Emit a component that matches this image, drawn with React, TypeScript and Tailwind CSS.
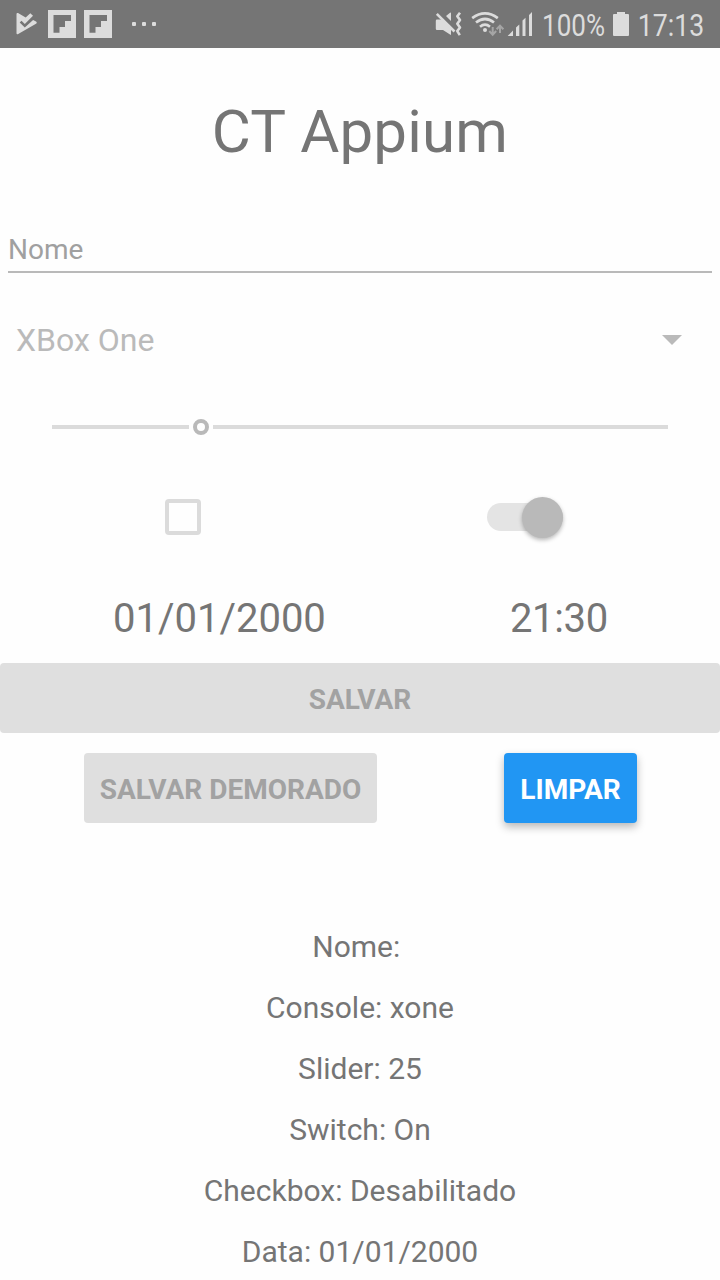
const results = [
  'Nome: ',
  'Console: xone',
  'Slider: 25',
  'Switch: On',
  'Checkbox: Desabilitado',
  'Data: 01/01/2000',
];

function PlayCheckIcon() {
  return (
    <svg className="h-6 w-6" viewBox="0 0 24 24" fill="#dcdcdc">
      <path d="M1.500 2.200C1.500 1.200 2.200 .7 3 1.100L10.700 5.400 15.300 1.200 18 3.800 9.800 12 6.500 8.700 4.700 10.500 9.800 15.400 18.100 8 21 9.600C22 10.300 22 11.200 21 11.800L3.200 22C2.200 22.500 1.500 22.200 1.500 21.200Z" />
    </svg>
  );
}

function FlipIcon() {
  return (
    <svg className="h-7 w-7" viewBox="0 0 28 28">
      <path fill="#dcdcdc" d="M0 0h28v28H0z" />
      <path fill="#757575" d="M5.5 5h17.5v6h-6v6h-5.5v5.7h-6z" />
    </svg>
  );
}

function StatusBar() {
  return (
    <header className="flex h-12 items-center bg-[#757575] pr-4 pl-[15px] text-[31px] leading-none text-[#dcdcdc]">
      <PlayCheckIcon />
      <div className="ml-[9px] flex gap-2">
        <FlipIcon />
        <FlipIcon />
      </div>
      <div className="ml-5 flex gap-[6px]">
        <span className="size-1 rounded-[1px] bg-[#dcdcdc]" />
        <span className="size-1 rounded-[1px] bg-[#dcdcdc]" />
        <span className="size-1 rounded-[1px] bg-[#dcdcdc]" />
      </div>
      <svg className="mr-px ml-auto h-12 w-[110px] shrink-0" viewBox="0 0 110 48" fill="none">
        <path fill="#dcdcdc" d="M5 19.500h5L19 28.500V34q0 1.500-1 .6L11 30H5q-1.200 0-1.200-1.200v-8Q3.800 19.500 5 19.500zM14 16l4-3.300q1-.7 1 .5V21z" />
        <path stroke="#dcdcdc" strokeWidth="2.600" d="m4.800 13.800 17.700 17.700" />
        <path stroke="#dcdcdc" strokeWidth="2.600" strokeLinejoin="round" d="m28 12.800-2.700 3.500 2.700 3.700-2.700 3.700 2.700 3.700-2.700 3.700 2.500 4" />
        <g stroke="#dcdcdc" strokeWidth="2.700">
          <path d="M40.200 18.200q12.800-9.600 25.600 0" />
          <path d="M44 22.500q9-7 18 0" />
          <path d="M48 26.700q5-4 10 0" />
        </g>
        <circle cx="53" cy="30" r="2" fill="#dcdcdc" />
        <path stroke="#a5a5a5" strokeWidth="2" d="M60.700 27v7.500M57.300 31l3.400 3.800 3.400-3.800M68 33v-7M64.600 29.300 68 25.700l3.400 3.600" />
        <path fill="#dcdcdc" d="m75.700 36 5.300-5.500V36zM84 27.500l3.300-3V36H84zM90.500 20.500l3-2.800V36h-3zM97 15l3-3v24h-3z" />
      </svg>
      <span className="mr-2 flex w-[62px] shrink-0 justify-end">
        <span className="origin-right scale-x-[0.84] pt-0.5">100%</span>
      </span>
      <svg className="h-6 w-4 shrink-0" viewBox="0 0 16 24" fill="#dcdcdc">
        <path d="M4 0h8v2h3q1 0 1 1v20q0 1-1 1H1q-1 0-1-1V3q0-1 1-1h3z" />
      </svg>
      <span className="flex w-[75px] shrink-0 justify-end">
        <span className="origin-right scale-x-[0.86] pt-0.5">17:13</span>
      </span>
    </header>
  );
}

export default function App() {
  return (
    <div
      className="flex h-[1280px] w-[720px] flex-col overflow-hidden bg-[#fefefe] text-[#757575]"
      style={{ fontFamily: 'Roboto, sans-serif' }}
    >
      <StatusBar />
      <main className="flex flex-col">
        <h1 className="flex h-[167px] items-center justify-center text-[60px] tracking-[0.2px]">CT Appium</h1>
        <div className="mx-2 mt-[13px] flex h-[45px] items-center border-b-2 border-[#b9b9b9] text-[28px] text-[#a0a0a0]">
          Nome
        </div>
        <div className="flex h-[134px] items-center justify-between pr-[38px] pl-4 text-[32px] text-[#bababa]">
          <span>XBox One</span>
          <svg className="h-[10px] w-5" viewBox="0 0 20 10" fill="#bababa">
            <path d="M0 0h20L10 10z" />
          </svg>
        </div>
        <div className="mx-[52px] flex h-10 items-center">
          <div className="h-1 w-[137px] bg-[#dbdbdb]" />
          <div className="mx-1 size-4 rounded-full border-4 border-[#b9b9b9]" />
          <div className="h-1 flex-1 bg-[#dbdbdb]" />
        </div>
        <div className="mt-[30px] flex h-20 items-center pr-[157px] pl-[165px]">
          <div className="size-9 rounded-[4px] border-4 border-[#dbdbdb]" />
          <div className="ml-auto flex h-7 w-[76px] items-center justify-end rounded-full bg-[#e4e4e4]">
            <div className="size-[41px] shrink-0 rounded-full bg-[#b9b9b9] shadow-[0_2px_4px_rgba(0,0,0,0.28)]" />
          </div>
        </div>
        <div className="mt-5 flex h-[82px] items-center justify-between pt-0.5 pr-[112px] pl-[113px] text-[40px]">
          <span>01/01/2000</span>
          <span className="tracking-[-0.3px]">21:30</span>
        </div>
        <button className="mt-1 h-[70px] w-full rounded-[4px] bg-[#dfdfdf] pt-1 text-[28px] font-bold text-[#a2a2a2]">
          SALVAR
        </button>
        <div className="mt-5 flex justify-between pr-[83px] pl-[84px] text-[28px] font-bold">
          <button className="h-[70px] w-[293px] rounded-[4px] bg-[#dfdfdf] pt-1 text-[#a2a2a2]">SALVAR DEMORADO</button>
          <button className="h-[70px] w-[133px] rounded-[4px] bg-[#2196f3] pt-1 text-white shadow-[0_4px_8px_rgba(0,0,0,0.28)]">
            LIMPAR
          </button>
        </div>
        <div className="mt-[93px] text-center text-[30px] leading-[61px] whitespace-pre">
          {results.map((line) => (
            <p key={line}>{line}</p>
          ))}
        </div>
      </main>
    </div>
  );
}
